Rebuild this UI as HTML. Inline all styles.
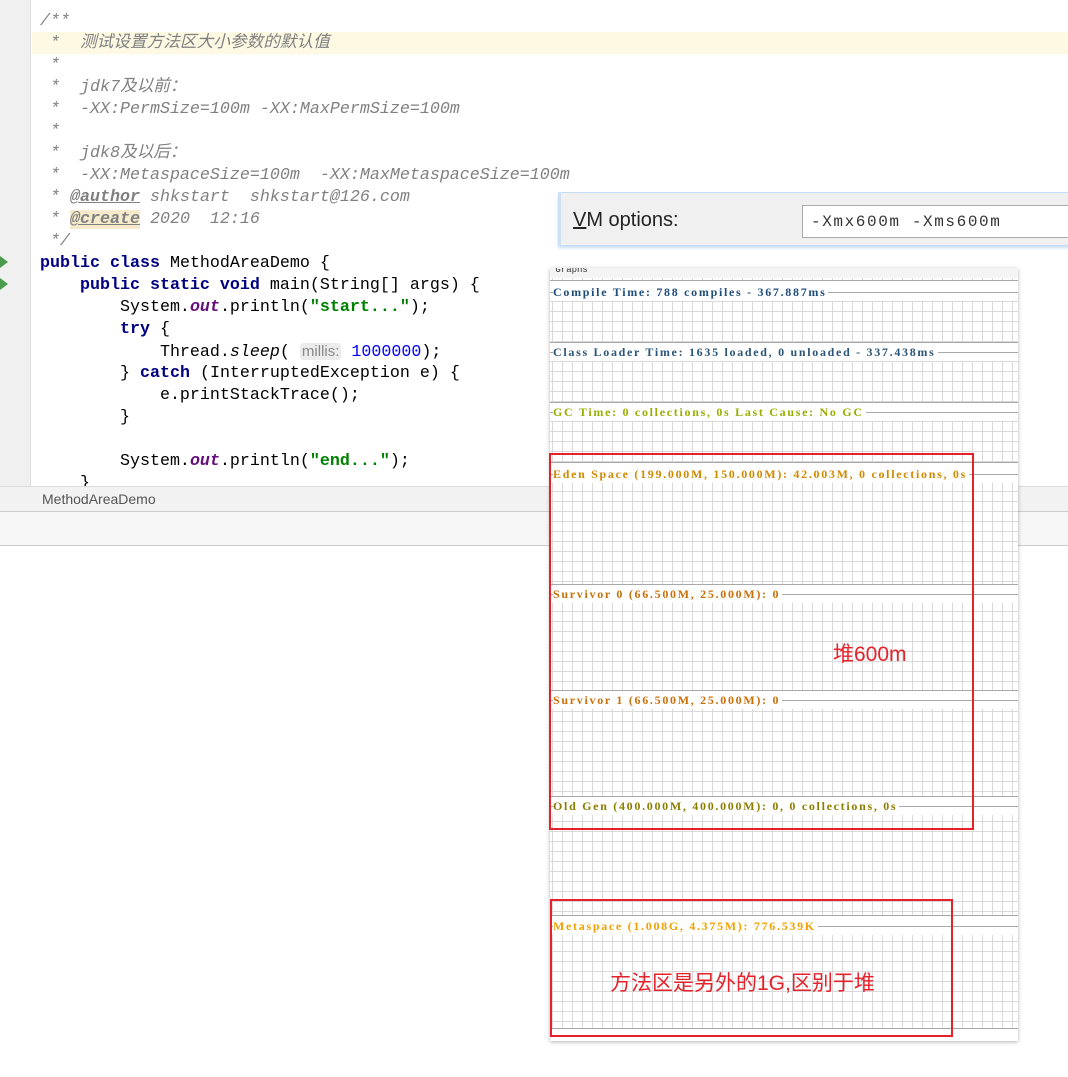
<!DOCTYPE html>
<html><head><meta charset="utf-8"><style>
*{margin:0;padding:0;box-sizing:border-box}
body{width:1068px;height:1077px;background:#fff;position:relative;overflow:hidden;font-family:"Liberation Mono","Noto Sans CJK SC",monospace}
.gut{position:absolute;left:0;top:0;width:31px;height:486px;background:#f0f0f0;border-right:1px solid #ddd}
.hl{position:absolute;left:32px;top:32px;width:1036px;height:22px;background:#fdf9e3}
.ln{position:absolute;left:40px;font-size:16.67px;white-space:pre;line-height:22px;color:#000;font-family:"Liberation Mono","Noto Sans CJK SC",monospace}
.c{color:#808080;font-style:italic}
.k{color:#000080;font-weight:bold}
.s{color:#008000;font-weight:bold}
.o{color:#660e7a;font-weight:bold;font-style:italic}
.n{color:#0000ff}
.tag{color:#808080;font-weight:bold;text-decoration:underline;font-style:italic}
.hint{background:#ececec;color:#888;font-family:"Liberation Sans",sans-serif;font-size:15px;border-radius:3px;padding:0 2px}
.run{position:absolute;left:0;width:0;height:0;border-top:6px solid transparent;border-bottom:6px solid transparent;border-left:8px solid #4a9c4a}
.tab{position:absolute;left:0;top:486px;width:1068px;height:26px;background:#f2f2f2;border-top:1px solid #ddd;border-bottom:1px solid #ccc;font-family:"Liberation Sans",sans-serif;font-size:14px;color:#555;padding:4px 0 0 42px}
.bar{position:absolute;left:0;top:512px;width:1068px;height:34px;background:#f7f7f7;border-bottom:1px solid #ccc}
.vm{position:absolute;left:558px;top:192px;width:520px;height:54px;background:#f0f0f0;border:1px solid #c6dcf5;border-left:3px solid #cfe0f5;box-shadow:0 2px 3px #c6dcf5}
.vm .lab{position:absolute;left:12px;top:16px;font-family:"Liberation Sans",sans-serif;font-size:20px;color:#222}
.vm .in{position:absolute;left:241px;top:12px;width:290px;height:33px;background:#fff;border:1px solid #aaa;font-size:16px;letter-spacing:1.6px;padding:7px 0 0 8px;color:#333;font-family:"Liberation Mono",monospace}
.pan{position:absolute;left:550px;top:268px;width:468px;height:773px;background:#fff;box-shadow:0 1px 4px rgba(0,0,0,.3)}
.grid{position:absolute;left:0;top:10px;width:468px;height:750px;background-color:#fff;background-image:linear-gradient(to right,#d9d9d9 1px,transparent 1px),linear-gradient(to bottom,#d9d9d9 1px,transparent 1px);background-size:10px 10px;background-position:2px 3px}
.hd{position:absolute;left:0;width:468px;background:#fff;border-top:1px solid #a8a8a8}
.hd .line{position:absolute;left:0;right:0;height:1px;background:#a8a8a8}
.hd span{position:absolute;left:3px;background:#fff;font-family:"Liberation Serif","Noto Serif CJK SC",serif;font-weight:bold;font-size:12px;letter-spacing:1.7px;line-height:12px;padding-right:2px}
.box{position:absolute;border:2px solid #e8202a}
.red{position:absolute;color:#e8202a;font-family:"Liberation Sans","Noto Sans CJK SC",sans-serif;font-size:21px}
</style></head><body>
<div class="gut"></div>
<div class="hl"></div>
<div class="run" style="top:256px"></div>
<div class="run" style="top:278px"></div>
<div class="ln c" style="top:11px">/**</div>
<div class="ln c" style="top:33px"> *  测试设置方法区大小参数的默认值</div>
<div class="ln c" style="top:55px"> *</div>
<div class="ln c" style="top:77px"> *  jdk7及以前：</div>
<div class="ln c" style="top:99px"> *  -XX:PermSize=100m -XX:MaxPermSize=100m</div>
<div class="ln c" style="top:121px"> *</div>
<div class="ln c" style="top:143px"> *  jdk8及以后：</div>
<div class="ln c" style="top:165px"> *  -XX:MetaspaceSize=100m  -XX:MaxMetaspaceSize=100m</div>
<div class="ln c" style="top:187px"> * <span class="tag">@author</span> shkstart  shkstart@126.com</div>
<div class="ln c" style="top:209px"> * <span class="tag" style="background:#f5eacb">@create</span> 2020  12:16</div>
<div class="ln c" style="top:231px"> */</div>
<div class="ln" style="top:253px"><span class="k">public class</span> MethodAreaDemo {</div>
<div class="ln" style="top:275px">    <span class="k">public static void</span> main(String[] args) {</div>
<div class="ln" style="top:297px">        System.<span class="o">out</span>.println(<span class="s">"start..."</span>);</div>
<div class="ln" style="top:319px">        <span class="k">try</span> {</div>
<div class="ln" style="top:341px">            Thread.<i>sleep</i>( <span class="hint">millis:</span> <span class="n">1000000</span>);</div>
<div class="ln" style="top:363px">        } <span class="k">catch</span> (InterruptedException e) {</div>
<div class="ln" style="top:385px">            e.printStackTrace();</div>
<div class="ln" style="top:407px">        }</div>
<div class="ln" style="top:451px">        System.<span class="o">out</span>.println(<span class="s">"end..."</span>);</div>
<div class="ln" style="top:473px;height:13px;overflow:hidden">    }</div>
<div class="tab">MethodAreaDemo</div>
<div class="bar"></div>

<div class="vm"><div class="lab"><u>V</u>M options:</div><div class="in">-Xmx600m -Xms600m</div></div>

<div class="pan">
 <div style="position:absolute;left:0;top:0;width:468px;height:10px;background:#f4f4f4;font-size:9px;color:#333;line-height:4px;overflow:hidden">&nbsp;Graphs</div>
 <div class="grid"></div>
 <div class="hd" style="top:12px;height:21px"><div class="line" style="top:11px"></div><span style="top:5px;color:#1f4e79">Compile Time: 788 compiles - 367.887ms</span></div>
 <div class="hd" style="top:74px;height:19px"><div class="line" style="top:9px"></div><span style="top:3px;color:#2b5576">Class Loader Time: 1635 loaded, 0 unloaded - 337.438ms</span></div>
 <div class="hd" style="top:134px;height:19px"><div class="line" style="top:9px"></div><span style="top:3px;color:#9aad00">GC Time: 0 collections, 0s Last Cause: No GC</span></div>
 <div class="hd" style="top:194px;height:21px"><div class="line" style="top:11px"></div><span style="top:5px;color:#d08a00">Eden Space (199.000M, 150.000M): 42.003M, 0 collections, 0s</span></div>
 <div class="hd" style="top:316px;height:19px"><div class="line" style="top:9px"></div><span style="top:3px;color:#c8700a">Survivor 0 (66.500M, 25.000M): 0</span></div>
 <div class="hd" style="top:422px;height:19px"><div class="line" style="top:9px"></div><span style="top:3px;color:#c8700a">Survivor 1 (66.500M, 25.000M): 0</span></div>
 <div class="hd" style="top:528px;height:19px"><div class="line" style="top:9px"></div><span style="top:3px;color:#8c7d00">Old Gen (400.000M, 400.000M): 0, 0 collections, 0s</span></div>
 <div class="hd" style="top:647px;height:20px"><div class="line" style="top:10px"></div><span style="top:4px;color:#f0a000">Metaspace (1.008G, 4.375M): 776.539K</span></div>
 <div class="hd" style="top:760px;height:13px"></div>
</div>

<div class="box" style="left:549px;top:453px;width:425px;height:377px"></div>
<div class="box" style="left:550px;top:899px;width:403px;height:138px"></div>
<div class="red" style="left:833px;top:638px">堆600m</div>
<div class="red" style="left:610px;top:967px">方法区是另外的1G,区别于堆</div>
</body></html>
